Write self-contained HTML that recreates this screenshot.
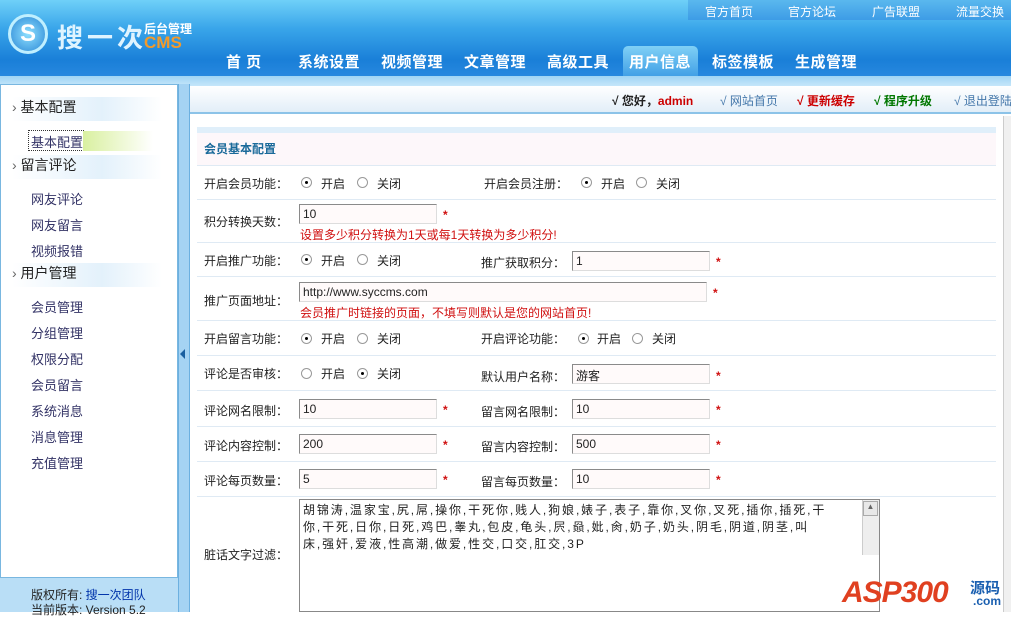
<!DOCTYPE html>
<html><head><meta charset="utf-8">
<style>
*{margin:0;padding:0;box-sizing:border-box}
body{width:1011px;height:612px;overflow:hidden;position:relative;background:#fff;font-family:"Liberation Sans","Noto Sans CJK SC","WenQuanYi Zen Hei",sans-serif;font-size:12px;color:#333}
.a{position:absolute;white-space:nowrap}
#hd{position:absolute;left:0;top:0;width:1011px;height:80px;background:linear-gradient(#6fd0f8 0%,#3aa6ea 35%,#1a7fd8 75%,#2a8ae0 100%)}
#tl{position:absolute;left:688px;top:0;width:323px;height:20px;background:linear-gradient(#5ab8ee,#3d9ce6);}
#tl span{position:absolute;top:3px;color:#fff;font-size:12px}
.nav{position:absolute;top:51px;color:#fff;font-size:15px;font-weight:bold;letter-spacing:0.5px}
#strip{position:absolute;left:0;top:76px;width:1011px;height:10px;background:linear-gradient(#9fd4f4,#c5e6fa)}
#side{position:absolute;left:0;top:84px;width:178px;height:494px;background:#fff;border:1px solid #79b7e0}
#sfoot{position:absolute;left:0;top:578px;width:190px;height:34px;background:#b9def6}
#bar{position:absolute;left:178px;top:84px;width:12px;height:528px;background:#a5d3f3;border-left:1px solid #6cb0e0;border-right:1px solid #6cb0e0}
.h{position:absolute;left:12px;font-size:14px;color:#222;width:150px;height:24px;background:linear-gradient(90deg,#fff,#e3f1fb 60%,#fff)}
.s{position:absolute;left:31px;font-size:13px;color:#336}
#top{position:absolute;left:190px;top:86px;width:821px;height:28px;background:linear-gradient(#fff,#e2eef8);border-bottom:2px solid #8cc3e8}
#main{position:absolute;left:190px;top:116px;width:821px;height:496px;background:#fff}
.ln{position:absolute;left:197px;width:799px;height:1px;background:#dfeaf4}
.lb{position:absolute;font-size:12px;color:#222}
.in{position:absolute;height:20px;border:1px solid #8a8a8a;border-right-color:#ddd;border-bottom-color:#ddd;background:#fffafa;font-size:12px;padding:2px 3px;color:#222}
.st{position:absolute;color:#d01010;font-size:12px;font-weight:bold}
.red{position:absolute;color:#d01010;font-size:12px}
.r{position:absolute;width:11px;height:11px;border-radius:50%;border:1px solid #999;background:#fff}
.r.on::after{content:"";position:absolute;left:3px;top:3px;width:3px;height:3px;border-radius:50%;background:#000}
</style></head><body>
<div id="hd">
 <div class="a" style="left:8px;top:14px;width:40px;height:40px;border-radius:50%;background:radial-gradient(#8fe0ff,#2b88d6);border:3px solid #bfefff"></div>
 <div class="a" style="left:20px;top:20px;color:#fff;font-weight:bold;font-size:24px">S</div>
 <div class="a" style="left:57px;top:18px;color:#dff4ff;font-size:26px;font-weight:bold;letter-spacing:4px">搜一次</div>
 <div class="a" style="left:144px;top:20px;color:#fff;font-size:12px;font-weight:bold">后台管理</div>
 <div class="a" style="left:144px;top:33px;color:#f39a2a;font-size:17px;font-weight:bold">CMS</div>
 <div id="tl"><span style="left:17px">官方首页</span><span style="left:100px">官方论坛</span><span style="left:184px">广告联盟</span><span style="left:268px">流量交换</span></div>
 <div class="a" style="left:623px;top:46px;width:75px;height:34px;border-radius:5px 5px 0 0;background:linear-gradient(#7fd0f6,#3a9ae4)"></div>
 <span class="nav" style="left:226px">首 页</span>
 <span class="nav" style="left:298px">系统设置</span>
 <span class="nav" style="left:381px">视频管理</span>
 <span class="nav" style="left:464px">文章管理</span>
 <span class="nav" style="left:547px">高级工具</span>
 <span class="nav" style="left:629px">用户信息</span>
 <span class="nav" style="left:712px">标签模板</span>
 <span class="nav" style="left:795px">生成管理</span>
</div>
<div id="strip"></div>
<div id="side"></div>
<div class="h" style="top:97px"><span style="color:#666">›</span> 基本配置</div>
<div class="a" style="left:29px;top:131px;font-size:13px;color:#336;outline:1px dotted #333;width:54px;height:19px;line-height:19px"></div>
<div class="a" style="left:83px;top:131px;width:70px;height:20px;background:linear-gradient(90deg,#d9f0a0,#fff)"></div>
<div class="s" style="top:132px;color:#336">基本配置</div>
<div class="h" style="top:155px"><span style="color:#666">›</span> 留言评论</div>
<div class="s" style="top:189px">网友评论</div>
<div class="s" style="top:215px">网友留言</div>
<div class="s" style="top:241px">视频报错</div>
<div class="h" style="top:263px"><span style="color:#666">›</span> 用户管理</div>
<div class="s" style="top:297px">会员管理</div>
<div class="s" style="top:323px">分组管理</div>
<div class="s" style="top:349px">权限分配</div>
<div class="s" style="top:375px">会员留言</div>
<div class="s" style="top:401px">系统消息</div>
<div class="s" style="top:427px">消息管理</div>
<div class="s" style="top:453px">充值管理</div>
<div id="sfoot"></div>
<div class="a" style="left:31px;top:586px;font-size:12px;color:#222">版权所有: <span style="color:#0033aa">搜一次团队</span></div>
<div class="a" style="left:31px;top:601px;font-size:12px;color:#222">当前版本: Version 5.2</div>
<div id="bar"></div>
<div class="a" style="left:180px;top:349px;width:0;height:0;border-top:5px solid transparent;border-bottom:5px solid transparent;border-right:5px solid #1a5fa0"></div>
<div id="top"></div>
<div class="a" style="left:612px;top:92px;font-weight:bold;color:#222">√ 您好，<span style="color:#c00">admin</span></div>
<div class="a" style="left:720px;top:92px;color:#4477aa">√ 网站首页</div>
<div class="a" style="left:797px;top:92px;font-weight:bold;color:#c00">√ 更新缓存</div>
<div class="a" style="left:874px;top:92px;font-weight:bold;color:#070">√ 程序升级</div>
<div class="a" style="left:954px;top:92px;color:#4477aa">√ 退出登陆</div>
<div id="main"></div>
<div class="a" style="left:197px;top:127px;width:799px;height:6px;background:#e0effa"></div>
<div class="a" style="left:197px;top:133px;width:799px;height:32px;background:#fdf7fa"></div>
<div class="a" style="left:1003px;top:116px;width:8px;height:496px;background:#f0f0f0;border-left:1px solid #ccc"></div>
<div class="a" style="left:204px;top:140px;font-weight:bold;color:#1a6a9a;font-size:12px">会员基本配置</div>
<div class="ln" style="top:165px"></div><div class="ln" style="top:199px"></div><div class="ln" style="top:242px"></div><div class="ln" style="top:276px"></div><div class="ln" style="top:320px"></div><div class="ln" style="top:355px"></div><div class="ln" style="top:390px"></div><div class="ln" style="top:426px"></div><div class="ln" style="top:461px"></div><div class="ln" style="top:496px"></div>
<div class="lb" style="left:204px;top:175px">开启会员功能：</div>
<div class="r on" style="left:301px;top:177px"></div><div class="lb" style="left:321px;top:175px">开启</div>
<div class="r" style="left:357px;top:177px"></div><div class="lb" style="left:377px;top:175px">关闭</div>
<div class="lb" style="left:484px;top:175px">开启会员注册：</div>
<div class="r on" style="left:581px;top:177px"></div><div class="lb" style="left:601px;top:175px">开启</div>
<div class="r" style="left:636px;top:177px"></div><div class="lb" style="left:656px;top:175px">关闭</div>
<div class="lb" style="left:204px;top:213px">积分转换天数：</div>
<div class="in" style="left:299px;top:204px;width:138px">10</div><div class="st" style="left:443px;top:208px">*</div>
<div class="red" style="left:300px;top:226px">设置多少积分转换为1天或每1天转换为多少积分!</div>
<div class="lb" style="left:204px;top:252px">开启推广功能：</div>
<div class="r on" style="left:301px;top:254px"></div><div class="lb" style="left:321px;top:252px">开启</div>
<div class="r" style="left:357px;top:254px"></div><div class="lb" style="left:377px;top:252px">关闭</div>
<div class="lb" style="left:481px;top:254px">推广获取积分：</div>
<div class="in" style="left:572px;top:251px;width:138px">1</div><div class="st" style="left:716px;top:255px">*</div>
<div class="lb" style="left:204px;top:292px">推广页面地址：</div>
<div class="in" style="left:299px;top:282px;width:408px">http://www.syccms.com</div><div class="st" style="left:713px;top:286px">*</div>
<div class="red" style="left:300px;top:304px">会员推广时链接的页面，不填写则默认是您的网站首页!</div>
<div class="lb" style="left:204px;top:330px">开启留言功能：</div>
<div class="r on" style="left:301px;top:333px"></div><div class="lb" style="left:321px;top:330px">开启</div>
<div class="r" style="left:357px;top:333px"></div><div class="lb" style="left:377px;top:330px">关闭</div>
<div class="lb" style="left:481px;top:330px">开启评论功能：</div>
<div class="r on" style="left:578px;top:333px"></div><div class="lb" style="left:597px;top:330px">开启</div>
<div class="r" style="left:632px;top:333px"></div><div class="lb" style="left:652px;top:330px">关闭</div>
<div class="lb" style="left:204px;top:365px">评论是否审核：</div>
<div class="r" style="left:301px;top:368px"></div><div class="lb" style="left:321px;top:365px">开启</div>
<div class="r on" style="left:357px;top:368px"></div><div class="lb" style="left:377px;top:365px">关闭</div>
<div class="lb" style="left:481px;top:368px">默认用户名称：</div>
<div class="in" style="left:572px;top:364px;width:138px">游客</div><div class="st" style="left:716px;top:369px">*</div>
<div class="lb" style="left:204px;top:402px">评论网名限制：</div>
<div class="in" style="left:299px;top:399px;width:138px">10</div><div class="st" style="left:443px;top:403px">*</div>
<div class="lb" style="left:481px;top:403px">留言网名限制：</div>
<div class="in" style="left:572px;top:399px;width:138px">10</div><div class="st" style="left:716px;top:403px">*</div>
<div class="lb" style="left:204px;top:437px">评论内容控制：</div>
<div class="in" style="left:299px;top:434px;width:138px">200</div><div class="st" style="left:443px;top:438px">*</div>
<div class="lb" style="left:481px;top:438px">留言内容控制：</div>
<div class="in" style="left:572px;top:434px;width:138px">500</div><div class="st" style="left:716px;top:438px">*</div>
<div class="lb" style="left:204px;top:472px">评论每页数量：</div>
<div class="in" style="left:299px;top:469px;width:138px">5</div><div class="st" style="left:443px;top:473px">*</div>
<div class="lb" style="left:481px;top:473px">留言每页数量：</div>
<div class="in" style="left:572px;top:469px;width:138px">10</div><div class="st" style="left:716px;top:473px">*</div>
<div class="lb" style="left:204px;top:546px">脏话文字过滤：</div>
<div class="a" style="left:299px;top:499px;width:581px;height:113px;border:1px solid #888;background:#fff;padding:2px 2px 0 3px;font-size:12px;line-height:17px;color:#222;letter-spacing:1.9px">胡锦涛,温家宝,尻,屌,操你,干死你,贱人,狗娘,婊子,表子,靠你,叉你,叉死,插你,插死,干<br>你,干死,日你,日死,鸡巴,睾丸,包皮,龟头,屄,赑,妣,肏,奶子,奶头,阴毛,阴道,阴茎,叫<br>床,强奸,爱液,性高潮,做爱,性交,口交,肛交,3P</div>
<div class="a" style="left:862px;top:500px;width:17px;height:55px;background:#eee;border-left:1px solid #ccc"></div>
<div class="a" style="left:863px;top:501px;width:15px;height:15px;background:#e8e8e8;border:1px solid #aaa;font-size:8px;text-align:center;color:#666">▲</div>
<div class="a" style="left:842px;top:576px;font-size:30px;font-weight:bold;font-style:italic;color:#e04020;letter-spacing:-1px">ASP300</div>
<div class="a" style="left:970px;top:577px;font-size:15px;font-weight:bold;color:#1a5fb0">源码</div>
<div class="a" style="left:973px;top:594px;font-size:12px;font-weight:bold;color:#1a5fb0">.com</div>
</body></html>
